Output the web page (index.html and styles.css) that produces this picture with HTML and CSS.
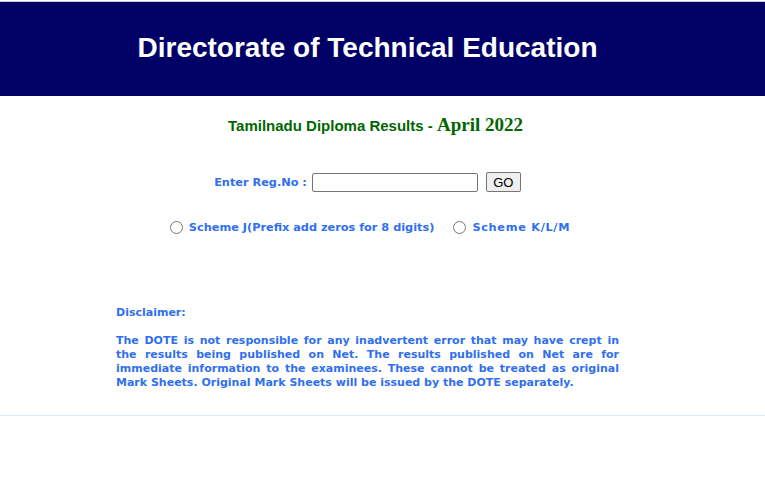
FILE: index.html
```html
<!DOCTYPE html>
<html lang="en">
<head>
<meta charset="utf-8">
<title>Tamilnadu Diploma Results - April 2022</title>
<link rel="stylesheet" href="styles.css">
</head>
<body>
<div class="page">
  <header class="banner">
    <div class="wrap banner-inner">
      <h1 class="banner-title">Directorate of Technical Education</h1>
    </div>
  </header>
  <main class="wrap content">
    <p class="subtitle">Tamilnadu Diploma Results - <span class="year">April 2022</span></p>
    <form class="reg-form" onsubmit="return false;">
      <div class="reg-row">
        <label class="reg-label" for="regno">Enter Reg.No :</label>
        <input class="reg-input" type="text" id="regno" name="regno">
        <button class="go-btn" type="submit">GO</button>
      </div>
      <div class="scheme-row">
        <label class="scheme"><input class="scheme-radio" type="radio" name="scheme" value="J"><span>Scheme J(Prefix add zeros for 8 digits)</span></label>
        <label class="scheme scheme-klm"><input class="scheme-radio" type="radio" name="scheme" value="KLM"><span>Scheme K/L/M</span></label>
      </div>
    </form>
    <section class="disclaimer">
      <p class="d-title">Disclaimer:</p>
      <p class="d-text">The DOTE is not responsible for any inadvertent error that may have crept in the results being published on Net. The results published on Net are for immediate information to the examinees. These cannot be treated as original Mark Sheets. Original Mark Sheets will be issued by the DOTE separately.</p>
    </section>
  </main>
  <div class="rule"></div>
</div>
</body>
</html>
```
FILE: styles.css
```css
html, body {
  margin: 0;
  padding: 0;
  background: #ffffff;
}
.page {
  padding-top: 1px;
}
.wrap {
  width: 735px;
}
.banner {
  border-top: 1px solid #c4c4dc;
  background: #000066;
  height: 94px;
}
.banner-inner {
  height: 100%;
  display: flex;
  align-items: center;
  justify-content: center;
}
.banner-title {
  margin: 0;
  padding-bottom: 2px;
  font-family: "Liberation Sans", Arial, sans-serif;
  font-weight: bold;
  font-size: 28px;
  color: #ffffff;
}
.content {
  display: flex;
  flex-direction: column;
  align-items: center;
}
.subtitle {
  margin: 17px 0 0;
  padding-left: 16px;
  line-height: 24px;
  font-family: "Liberation Sans", Arial, sans-serif;
  font-weight: bold;
  font-size: 15px;
  color: #006600;
}
.year {
  font-family: "Liberation Serif", "Times New Roman", serif;
  font-size: 19px;
}
.reg-form {
  display: flex;
  flex-direction: column;
  align-items: center;
  margin-top: 34px;
}
.reg-row {
  display: flex;
  align-items: center;
}
.reg-label, .scheme {
  font-family: "DejaVu Sans", Verdana, sans-serif;
  font-weight: bold;
  font-size: 11.3px;
  color: #2f6ff0;
}
.reg-label {
  margin-right: 5px;
}
.reg-input {
  box-sizing: border-box;
  width: 166px;
  height: 19px;
  margin: 0 8px 0 0;
  border: 1px solid #767676;
  border-radius: 2px;
  padding: 1px 2px;
}
.go-btn {
  box-sizing: border-box;
  width: 35px;
  height: 20px;
  margin: 0;
  padding: 0;
  border: 1px solid #767676;
  border-radius: 2px;
  background: #efefef;
  font-family: "Liberation Sans", Arial, sans-serif;
  font-size: 13px;
  color: #000000;
}
.scheme-row {
  display: flex;
  align-items: center;
  margin-top: 29px;
  padding-left: 5px;
}
.scheme {
  display: flex;
  align-items: center;
}
.scheme + .scheme {
  margin-left: 19px;
}
.scheme-klm {
  letter-spacing: 0.7px;
}
.scheme-radio {
  width: 13px;
  height: 13px;
  margin: 0 6px 0 0;
}
.disclaimer {
  width: 503px;
  margin-top: 72px;
  font-family: "DejaVu Sans", Verdana, sans-serif;
  font-weight: bold;
  font-size: 11px;
  line-height: 14px;
  color: #2f6ff0;
}
.d-title {
  margin: 0;
}
.d-text {
  margin: 14px 0 0;
  text-align: justify;
}
.rule {
  margin-top: 25px;
  height: 1px;
  background: #dde8f8;
}
```
